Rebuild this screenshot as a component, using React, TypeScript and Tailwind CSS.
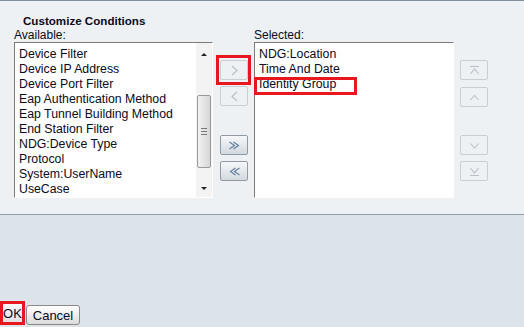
import React from "react";

const available = [
  "Device Filter",
  "Device IP Address",
  "Device Port Filter",
  "Eap Authentication Method",
  "Eap Tunnel Building Method",
  "End Station Filter",
  "NDG:Device Type",
  "Protocol",
  "System:UserName",
  "UseCase",
];

const selected = ["NDG:Location", "Time And Date", "Identity Group"];

type Glyph = "right" | "left" | "dright" | "dleft" | "top" | "up" | "down" | "bottom";

function GlyphIcon({ kind, color }: { kind: Glyph; color: string }) {
  const paths: Record<Glyph, string> = {
    right: "M4 2 L9 6.5 L4 11",
    left: "M9 2 L4 6.5 L9 11",
    dright: "M1.5 3 L6.5 6.5 L1.5 10 M5.5 3 L10.5 6.5 L5.5 10",
    dleft: "M7.5 3 L2.5 6.5 L7.5 10 M11.5 3 L6.5 6.5 L11.5 10",
    top: "M2 2.5 L11 2.5 M2.5 10 L6.5 5 L10.5 10",
    up: "M2.5 9 L6.5 4.5 L10.5 9",
    down: "M2.5 4.5 L6.5 9 L10.5 4.5",
    bottom: "M2.5 3 L6.5 8 L10.5 3 M2 10.5 L11 10.5",
  };
  return (
    <svg width="13" height="13" viewBox="0 0 13 13" fill="none">
      <path d={paths[kind]} stroke={color} strokeWidth="1.1" />
    </svg>
  );
}

function MoveButton({ kind, enabled }: { kind: Glyph; enabled?: boolean }) {
  return (
    <div
      className={
        enabled
          ? "flex h-[20px] w-[28px] items-center justify-center rounded-[2px] border border-[#8f9aa4] bg-[linear-gradient(#f6f8fa,#d2d9df)]"
          : "flex h-[20px] w-[28px] items-center justify-center rounded-[2px] border border-[#c9ced3] bg-[#eef1f3]"
      }
    >
      <GlyphIcon kind={kind} color={enabled ? "#5f7d9c" : "#b9bfc5"} />
    </div>
  );
}

function Scrollbar() {
  return (
    <div className="flex h-full w-[16px] flex-col items-center bg-[#f3f3f3]">
      <div className="flex h-[18px] w-full items-center justify-center pt-[4px]">
        <div className="h-0 w-0 border-x-[3px] border-b-[3px] border-x-transparent border-b-[#222]" />
      </div>
      <div className="mt-[34px] flex h-[73px] w-[14px] flex-col items-center justify-center gap-[2px] rounded-[2px] border border-[#9a9a9a] bg-[linear-gradient(to_right,#f2f2f2,#d6d6d6)]">
        <div className="h-px w-[6px] bg-[#777]" />
        <div className="h-px w-[6px] bg-[#777]" />
        <div className="h-px w-[6px] bg-[#777]" />
      </div>
      <div className="flex flex-1 items-end justify-center pb-[7px]">
        <div className="h-0 w-0 border-x-[3px] border-t-[3px] border-x-transparent border-t-[#222]" />
      </div>
    </div>
  );
}

export default function App() {
  return (
    <div
      className="flex h-[327px] w-[524px] flex-col overflow-hidden text-[#0a0a22]"
      style={{ fontFamily: '"Liberation Sans", Arial, sans-serif' }}
    >
      {/* Upper panel */}
      <div className="h-[215px] border-y border-t-[#7f919e] border-b-[#8fa1ac] bg-[#eef1f3]">
        <div className="pl-[23px] pt-[13px] text-[11.6px] font-bold leading-[14px]">
          Customize Conditions
        </div>

        <div className="flex items-start pl-[14px]">
          {/* Available */}
          <div className="w-[199px]">
            <div className="text-[12px] leading-[14px]">Available:</div>
            <div className="flex h-[156px] border border-b-white border-l-[#7a7a7a] border-r-white border-t-[#7a7a7a] bg-white">
              <div className="flex-1 pl-[4px] pt-[4px] text-[12.3px] leading-[15px]">
                {available.map((item) => (
                  <div key={item} className="whitespace-nowrap">
                    {item}
                  </div>
                ))}
              </div>
              <Scrollbar />
            </div>
          </div>

          {/* Move buttons */}
          <div className="ml-[7px] mt-[32px] flex w-[28px] flex-col">
            <div className="relative">
              <MoveButton kind="right" />
              <span className="absolute left-[-4px] top-[-5px] h-[30px] w-[35px] border-[3px] border-[#e8161f]" />
            </div>
            <div className="mt-[6px]">
              <MoveButton kind="left" />
            </div>
            <div className="mt-[29px]">
              <MoveButton kind="dright" enabled />
            </div>
            <div className="mt-[6px]">
              <MoveButton kind="dleft" enabled />
            </div>
          </div>

          {/* Selected */}
          <div className="ml-[6px] w-[200px]">
            <div className="text-[12px] leading-[14px]">Selected:</div>
            <div className="h-[156px] border border-b-white border-l-[#7a7a7a] border-r-white border-t-[#7a7a7a] bg-white pl-[4px] pt-[4px] text-[12.3px] leading-[15px]">
              {selected.map((item) => (
                <div key={item} className="relative whitespace-nowrap">
                  {item}
                  {item === "Identity Group" && (
                    <span className="absolute left-[-5px] top-[0px] h-[18px] w-[103px] border-[3px] border-[#e8161f]" />
                  )}
                </div>
              ))}
            </div>
          </div>

          {/* Order buttons */}
          <div className="ml-[6px] mt-[32px] flex w-[28px] flex-col">
            <MoveButton kind="top" />
            <div className="mt-[7px]">
              <MoveButton kind="up" />
            </div>
            <div className="mt-[28px]">
              <MoveButton kind="down" />
            </div>
            <div className="mt-[6px]">
              <MoveButton kind="bottom" />
            </div>
          </div>
        </div>
      </div>

      {/* Footer */}
      <div className="flex flex-1 items-end bg-[#dce3e9] pb-[2px]">
        <div className="flex items-end">
          <div className="relative flex h-[24px] w-[25px] items-center justify-center bg-[linear-gradient(#ffffff,#dcdcdc)] text-[13px] leading-none">
            OK
            <span className="absolute inset-0 border-[3px] border-[#e8161f]" />
          </div>
          <div className="ml-[1px] flex h-[20px] w-[54px] items-center justify-center rounded-[3px] border border-[#8a8a8a] bg-[linear-gradient(#ffffff,#dcdcdc)] text-[13px] leading-none">
            Cancel
          </div>
        </div>
      </div>
    </div>
  );
}
